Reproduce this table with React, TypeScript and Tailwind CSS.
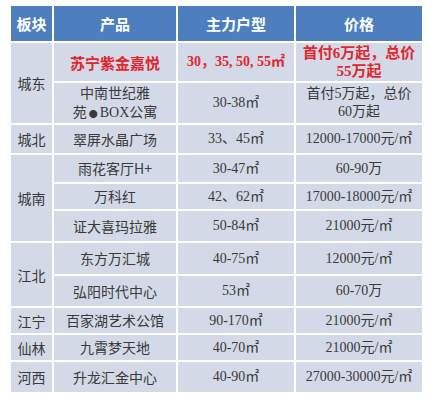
import React from 'react';

type Row = {
  area?: string;
  span?: number;
  product: React.ReactNode;
  size: string;
  price: React.ReactNode;
  hot?: boolean;
};

const rows: Row[] = [
  { area: '城东', span: 2, product: '苏宁紫金嘉悦', size: '30，35, 50, 55㎡', price: <>首付6万起，总价<br />55万起</>, hot: true },
  {
    product: (
      <>
        中南世纪雅
        <br />
        苑<span className="text-[9px] align-middle mx-[2px]">●</span><span className="font-['Liberation_Serif']">BOX</span>公寓
      </>
    ),
    size: '30-38㎡',
    price: <>首付5万起，总价<br />60万起</>,
  },
  { area: '城北', span: 1, product: '翠屏水晶广场', size: '33、45㎡', price: '12000-17000元/㎡' },
  { area: '城南', span: 3, product: '雨花客厅H+', size: '30-47㎡', price: '60-90万' },
  { product: '万科红', size: '42、62㎡', price: '17000-18000元/㎡' },
  { product: '证大喜玛拉雅', size: '50-84㎡', price: '21000元/㎡' },
  { area: '江北', span: 2, product: '东方万汇城', size: '40-75㎡', price: '12000元/㎡' },
  { product: '弘阳时代中心', size: '53㎡', price: '60-70万' },
  { area: '江宁', span: 1, product: '百家湖艺术公馆', size: '90-170㎡', price: '21000元/㎡' },
  { area: '仙林', span: 1, product: '九霄梦天地', size: '40-70㎡', price: '21000元/㎡' },
  { area: '河西', span: 1, product: '升龙汇金中心', size: '40-90㎡', price: '27000-30000元/㎡' },
];

const spanClass: Record<number, string> = {
  1: 'row-span-1',
  2: 'row-span-2',
  3: 'row-span-3',
};

const cell = 'flex items-center justify-center text-center bg-[#d3d9e7]';
const cjk = { fontFamily: '"Noto Sans CJK SC", sans-serif' };

export default function App() {
  return (
    <div className="w-[435px] h-[402px] bg-white pt-[6px] pl-[11px]">
      <div
        className="grid grid-cols-[41px_122px_116px_126px] grid-rows-[35px_38px_40px_28px_27px_25px_30px_31px_30px_25px_25px_30px] gap-[2px] text-[14px] leading-[18px] text-[#3a3a3a]"
        style={{ fontFamily: '"Liberation Serif", "Noto Sans CJK SC", serif' }}
      >
        {['板块', '产品', '主力户型', '价格'].map((h) => (
          <div key={h} className="flex items-center justify-center bg-[#4d7fbf] text-white font-bold text-[15px]" style={cjk}>
            {h}
          </div>
        ))}
        {rows.map((r, i) => (
          <React.Fragment key={i}>
            {r.area && (
              <div className={`${cell} ${spanClass[r.span ?? 1]}`} style={cjk}>
                {r.area}
              </div>
            )}
            <div className={`${cell} leading-[19px] ${r.hot ? 'text-[#e1262d] font-bold text-[15px]' : ''}`} style={cjk}>
              <div>{r.product}</div>
            </div>
            <div className={`${cell} ${r.hot ? 'text-[#e1262d] font-bold' : ''}`}>{r.size}</div>
            <div className={`${cell} leading-[18px] ${r.hot ? 'text-[#e1262d] font-bold text-[15px]' : ''}`}>
              <div>{r.price}</div>
            </div>
          </React.Fragment>
        ))}
      </div>
    </div>
  );
}
